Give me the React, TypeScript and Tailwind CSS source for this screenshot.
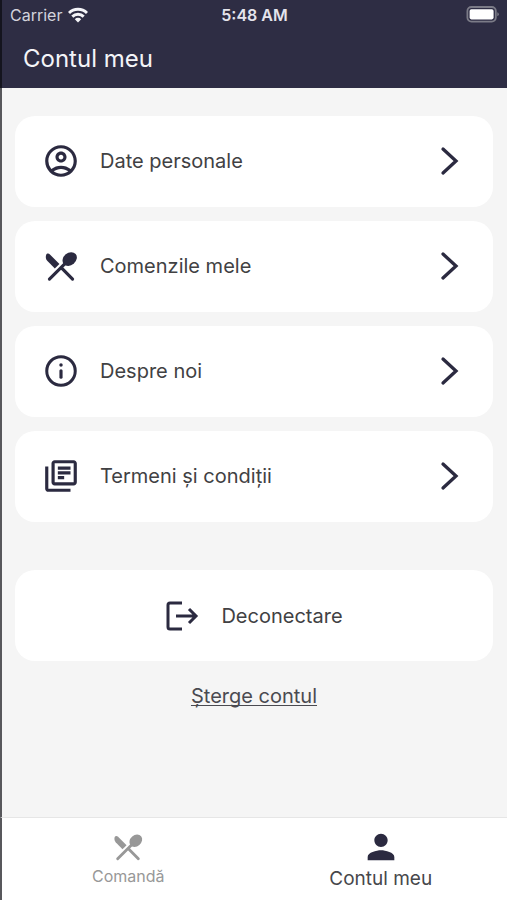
import type { ReactNode } from "react";
import {
  MdOutlineAccountCircle,
  MdOutlineLibraryBooks,
  MdPerson,
} from "react-icons/md";

function CutleryIcon({ className }: { className?: string }) {
  return (
    <svg viewBox="0 0 24 24" className={className} fill="currentColor" aria-hidden="true">
      <path d="M8.1 13.6L11 10.7L5 4.7C4.2 3.9 3 4 2.6 5C2.2 6.3 2.4 7.7 3.3 8.7z" />
      <ellipse cx="17.5" cy="7.6" rx="4.9" ry="3.9" transform="rotate(-40 17.5 7.6)" />
      <path
        d="M15 10L4.7 20.3M12.3 13.2l7 7.1"
        fill="none"
        stroke="currentColor"
        strokeWidth="2"
        strokeLinecap="round"
      />
    </svg>
  );
}

function InfoIcon({ className }: { className?: string }) {
  return (
    <svg viewBox="0 0 24 24" className={className} fill="none" stroke="currentColor" aria-hidden="true">
      <circle cx="12" cy="12" r="9" strokeWidth="1.9" />
      <path d="M12 11.9v4" strokeWidth="2" strokeLinecap="round" />
      <circle cx="12" cy="8.2" r="1.1" fill="currentColor" stroke="none" />
    </svg>
  );
}

function LogoutIcon({ className }: { className?: string }) {
  return (
    <svg viewBox="0 0 34 32" className={className} fill="none" stroke="currentColor" strokeWidth="3" aria-hidden="true">
      <path d="M17 3H5Q3 3 3 5v22q0 2 2 2h12" strokeLinejoin="round" />
      <path d="M11 16h20M24 9l7 7-7 7" />
    </svg>
  );
}

function ChevronIcon() {
  return (
    <svg viewBox="0 0 20 30" className="w-5 h-[30px]" fill="none" stroke="currentColor" strokeWidth="3.3" strokeLinecap="round" aria-hidden="true">
      <path d="M3 3l13 12L3 27" />
    </svg>
  );
}

function WifiIcon() {
  return (
    <svg viewBox="0 0 20 16" className="w-5 h-4" fill="none" stroke="currentColor" strokeWidth="2.9" aria-hidden="true">
      <path d="M1 6a12.8 12.8 0 0118 0M4.3 9.6a8.1 8.1 0 0111.4 0" />
      <path d="M10 15.5l-3.2-3.3a4.5 4.5 0 016.4 0z" fill="currentColor" stroke="none" />
    </svg>
  );
}

function BatteryIcon() {
  return (
    <svg viewBox="0 0 34 18" className="w-[34px] h-[18px]" aria-hidden="true">
      <rect x="2.4" y="1" width="28.4" height="14.6" rx="4" fill="none" stroke="#7b7b87" strokeWidth="1.8" />
      <rect x="4.6" y="3.2" width="24" height="10.2" rx="1.8" fill="#fff" />
      <path d="M32.3 6.3q1.5.5 1.5 2t-1.5 2z" fill="#7b7b87" />
    </svg>
  );
}

const items: { label: string; icon: ReactNode }[] = [
  { label: "Date personale", icon: <MdOutlineAccountCircle className="size-[38px]" /> },
  { label: "Comenzile mele", icon: <CutleryIcon className="size-[38px]" /> },
  { label: "Despre noi", icon: <InfoIcon className="size-[38px]" /> },
  { label: "Termeni și condiții", icon: <MdOutlineLibraryBooks className="size-[38px]" /> },
];

export default function App() {
  return (
    <div className="min-h-screen flex flex-col bg-[#f5f5f5] font-['Inter',sans-serif] text-[#2b2a40]">
      <header className="h-[88px] bg-[#2e2d44] text-[#f4f4f8] border-l-2 border-[#14141e]">
        <div className="h-[30px] grid grid-cols-3 items-center px-2">
          <div className="flex items-center gap-1.5">
            <span className="text-base text-[#d3d3dc]">Carrier</span>
            <WifiIcon />
          </div>
          <span className="text-center text-base font-semibold text-[#e4e4ec]">5:48 AM</span>
          <div className="flex justify-end">
            <BatteryIcon />
          </div>
        </div>
        <h1 className="pl-[21px] text-2xl leading-[58px]">Contul meu</h1>
      </header>

      <main className="flex-1 border-l-2 border-[#58585c] pl-[13px] pr-3.5 pt-7">
        <nav className="flex flex-col gap-3.5">
          {items.map((item) => (
            <button
              key={item.label}
              type="button"
              className="h-[91px] w-full flex items-center bg-white rounded-[20px] pl-[27px] pr-[33px] pb-px"
            >
              {item.icon}
              <span className="ml-5 flex-1 text-left text-xl text-[#414143]">{item.label}</span>
              <ChevronIcon />
            </button>
          ))}
        </nav>

        <button
          type="button"
          className="mt-12 h-[91px] w-full flex items-center justify-center gap-[22px] bg-white rounded-[20px]"
        >
          <LogoutIcon className="w-[34px] h-8" />
          <span className="text-xl text-[#414143]">Deconectare</span>
        </button>

        <div className="mt-5 text-center">
          <a
            href="#sterge"
            className="text-xl leading-[30px] text-[#4a4a50] underline underline-offset-2 decoration-1 [text-decoration-skip-ink:none]"
          >
            Șterge contul
          </a>
        </div>
      </main>

      <footer className="h-[83px] grid grid-cols-2 bg-white border-t border-l-2 border-t-[#e6e6e6] border-l-[#58585c]">
        <button type="button" className="flex flex-col items-center pt-3 text-[#989898]">
          <CutleryIcon className="size-[34px]" />
          <span className="text-base leading-6">Comandă</span>
        </button>
        <button type="button" className="flex flex-col items-center pt-[9px]">
          <MdPerson className="size-10" />
          <span className="text-[19px] leading-6 text-[#47474b]">Contul meu</span>
        </button>
      </footer>
    </div>
  );
}
